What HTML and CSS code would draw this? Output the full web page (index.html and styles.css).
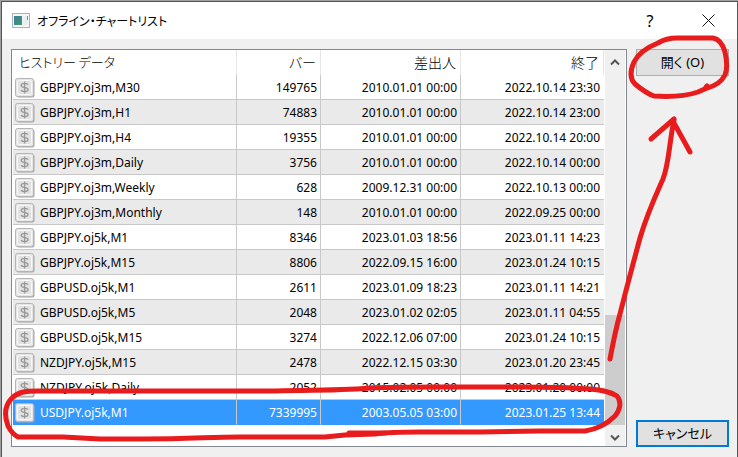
FILE: index.html
```
<!DOCTYPE html>
<html lang="ja">

<head>
    <meta charset="UTF-8">
    <meta name="viewport" content="width=device-width, initial-scale=1.0">
    <title>オフライン・チャートリスト</title>
    <link rel="stylesheet" href="styles.css">
</head>

<body>
    <div class="window">
        <header class="titlebar">
            <svg class="app-icon" width="18" height="15" viewBox="0 0 18 15">
                <rect x="0.5" y="0.5" width="17" height="14" fill="#f4f6f7" stroke="#a9b3b8" />
                <rect x="2" y="3" width="8" height="9" fill="url(#screen)" />
                <rect x="11" y="3" width="5" height="9" fill="#e9eef0" />
                <path d="M15.500 3v4" stroke="#5f9a8c" />
                <defs>
                    <linearGradient id="screen" x1="0" y1="0" x2="1" y2="1">
                        <stop offset="0" stop-color="#3f7fa5" />
                        <stop offset="1" stop-color="#3f9a62" />
                    </linearGradient>
                </defs>
            </svg>
            <h1>オフライン・チャートリスト</h1>
            <button class="title-btn help" aria-label="ヘルプ">?</button>
            <button class="title-btn" aria-label="閉じる">
                <svg width="13" height="13" viewBox="0 0 13 13">
                    <path d="M0.500 0.500l12 12M12.500 0.500l-12 12" fill="none" stroke="#111" />
                </svg>
            </button>
        </header>

        <main class="content">
            <div class="list">
                <table>
                    <colgroup>
                        <col>
                        <col class="col-bars">
                        <col class="col-from">
                        <col class="col-to">
                    </colgroup>
                    <thead>
                        <tr>
                            <th>ヒストリー データ</th>
                            <th>バー</th>
                            <th>差出人</th>
                            <th>終了</th>
                        </tr>
                    </thead>
                    <tbody id="rows"></tbody>
                </table>
                <div class="scrollbar">
                    <button class="arrow" aria-label="上へ">
                        <svg width="10" height="7" viewBox="0 0 10 7">
                            <path d="M1 5.500l4-4 4 4" />
                        </svg>
                    </button>
                    <div class="track">
                        <div class="thumb"></div>
                    </div>
                    <button class="arrow" aria-label="下へ">
                        <svg width="10" height="7" viewBox="0 0 10 7">
                            <path d="M1 1.500l4 4 4-4" />
                        </svg>
                    </button>
                </div>
            </div>

            <div class="actions">
                <button class="btn">開く (O)</button>
                <button class="btn btn-default">キャンセル</button>
            </div>
        </main>
    </div>

    <!-- red pen marks -->
    <svg class="marks" viewBox="0 0 738 457" preserveAspectRatio="none">
        <path d="M707 38H677C668 38 663 40 658 43C648 47 638 54 634 62C630 71 630 79 635 84C641 89 648 94 654 96C668 97 686 96 698 92L707 88C715 86 722 81 725 75C728 68 727 61 725 52C723 45 719 39 713 38Z" />
        <path d="M706 87l1-1" />
        <path d="M610 359C613 343 616 328 620 314C626 290 633 264 640 238C647 214 655 197 663 179C669 164 669 144 674 120" />
        <path d="M651 139L674 119M674 123L690 152" />
        <path d="M480 387H440C410 387 390 387 370 388C335 391 300 390 270 391H38C25 391 18 392 12 398C5 405 4 415 8 426C11 432 14 435 18 437H63L100 439H143C190 439 210 437 240 437H325L345 435L375 434C390 432 400 432 420 432H480L540 431H585C598 429 608 423 615 416C620 410 622 402 617 396C609 391 600 390 590 389C555 386 520 387 480 387Z" />
        <path d="M349 433L385 433" />
    </svg>

    <!-- coin icon used in every row -->
    <svg class="sprite" width="0" height="0">
        <symbol id="coin" viewBox="0 0 20 20">
            <rect x="1.500" y="1.500" width="18" height="18" rx="2" fill="#a6a6a6" />
            <rect x="0.500" y="0.500" width="18" height="18" rx="2" fill="#e6e6e6" stroke="#b4b4b4" />
            <rect x="2.500" y="2.500" width="14" height="14" rx="2" fill="#e2e2e2" stroke="#f8f8f8" />
            <path d="M13 6.500C12 5.500 10.500 5.300 9.500 5.300C7.500 5.300 6.200 6.100 6.200 7.400C6.200 10.200 13 8.400 13 11.500C13 12.900 11.500 13.600 9.600 13.600C8 13.600 6.800 13.200 6 12.300M9.600 3.500V15.500" fill="none" stroke="#999" stroke-width="1.300" />
        </symbol>
    </svg>

    <script>

        const history = [
            ['GBPJPY.oj3m,M30', '149765', '2010.01.01 00:00', '2022.10.14 23:30'],
            ['GBPJPY.oj3m,H1', '74883', '2010.01.01 00:00', '2022.10.14 23:00'],
            ['GBPJPY.oj3m,H4', '19355', '2010.01.01 00:00', '2022.10.14 20:00'],
            ['GBPJPY.oj3m,Daily', '3756', '2010.01.01 00:00', '2022.10.14 00:00'],
            ['GBPJPY.oj3m,Weekly', '628', '2009.12.31 00:00', '2022.10.13 00:00'],
            ['GBPJPY.oj3m,Monthly', '148', '2010.01.01 00:00', '2022.09.25 00:00'],
            ['GBPJPY.oj5k,M1', '8346', '2023.01.03 18:56', '2023.01.11 14:23'],
            ['GBPJPY.oj5k,M15', '8806', '2022.09.15 16:00', '2023.01.24 10:15'],
            ['GBPUSD.oj5k,M1', '2611', '2023.01.09 18:23', '2023.01.11 14:21'],
            ['GBPUSD.oj5k,M5', '2048', '2023.01.02 02:05', '2023.01.11 04:55'],
            ['GBPUSD.oj5k,M15', '3274', '2022.12.06 07:00', '2023.01.24 10:15'],
            ['NZDJPY.oj5k,M15', '2478', '2022.12.15 03:30', '2023.01.20 23:45'],
            ['NZDJPY.oj5k,Daily', '2052', '2015.02.05 00:00', '2023.01.20 00:00'],
            ['USDJPY.oj5k,M1', '7339995', '2003.05.05 03:00', '2023.01.25 13:44']
        ]

        const rows = document.querySelector('#rows')

        history.forEach(function (item, i) {
            const tr = document.createElement('tr')
            if (i === history.length - 1) {
                tr.className = 'selected'
            }
            tr.innerHTML = `<td><span class="name"><svg width="20" height="20"><use href="#coin" /></svg>${item[0]}</span></td>
                <td>${item[1]}</td><td>${item[2]}</td><td>${item[3]}</td>`
            rows.appendChild(tr)
        })
    </script>
</body>

</html>
```
FILE: styles.css
```
* {
    padding: 0;
    margin: 0;
    box-sizing: border-box;
}

body {
    position: relative;
    min-height: 100vh;
    padding: 1px 0 0 1px;
    background-color: #a0a0a0;
    color: #000;
    font-family: "Noto Sans", "Noto Sans CJK JP", sans-serif;
    font-size: 12px;
}

button {
    border: none;
    background: none;
    font-family: inherit;
    color: inherit;
}

.window {
    display: flex;
    flex-direction: column;
    min-height: calc(100vh - 1px);
    border: 1px solid #555;
    border-bottom: none;
    background-color: #f0f0f0;
}

.titlebar {
    display: flex;
    align-items: center;
    height: 37px;
    padding-left: 10px;
    background-color: white;
}

h1 {
    flex: 1;
    margin-left: 7px;
    font-family: "Noto Sans CJK JP", sans-serif;
    font-size: 12px;
    font-weight: 400;
    font-feature-settings: "palt";
}

.title-btn {
    display: flex;
    justify-content: center;
    align-items: center;
    width: 58px;
    height: 36px;
}

.help {
    font-size: 16px;
}

.content {
    display: flex;
    flex: 1;
    gap: 9px;
    padding: 10px 8px 10px 9px;
}

.list {
    display: flex;
    flex: 1;
    gap: 1px;
    padding: 0 1px;
    border: 1px solid #828790;
    background-color: white;
}

table {
    flex: 1;
    align-self: flex-start;
    table-layout: fixed;
    border-collapse: separate;
    border-spacing: 0;
}

.col-bars {
    width: 84px;
}

.col-from {
    width: 140px;
}

.col-to {
    width: 143px;
}

th {
    height: 25px;
    padding: 0 4px 2px;
    border-right: 1px solid #e5e5e5;
    font-family: "Noto Sans CJK JP", sans-serif;
    font-size: 14px;
    font-weight: 300;
    line-height: 20px;
    text-align: right;
    font-feature-settings: "palt";
}

th:first-child {
    padding-left: 6px;
    font-size: 13px;
    text-align: left;
}

td {
    height: 25px;
    padding: 1px 3px 0 2px;
    border-right: 1px solid #c8c8c8;
    border-bottom: 1px solid #c8c8c8;
    line-height: 20px;
    text-align: right;
    white-space: nowrap;
}

td:last-child {
    padding-right: 4px;
    border-right: none;
}

tbody tr:nth-child(even) {
    background-color: #eaeaea;
}

tbody tr.selected {
    background-color: #3399ff;
    color: white;
}

.selected td {
    border-bottom-color: #3399ff;
}

.name {
    display: flex;
    align-items: center;
    gap: 5px;
}

.scrollbar {
    display: flex;
    flex-direction: column;
    width: 20px;
    background-color: #f0f0f0;
}

.arrow {
    height: 21px;
}

.arrow path {
    fill: none;
    stroke: #555;
    stroke-width: 2;
}

.track {
    display: flex;
    flex: 1;
    flex-direction: column;
    justify-content: flex-end;
}

.thumb {
    height: 31%;
    background-color: #cdcdcd;
}

.actions {
    display: flex;
    flex-direction: column;
    justify-content: space-between;
    width: 93px;
}

.btn {
    height: 27px;
    padding-bottom: 2px;
    border: 1px solid #adadad;
    background-color: #e1e1e1;
    font-size: 13px;
    font-feature-settings: "palt";
}

.btn-default {
    border: 2px solid #0078d7;
}

.marks {
    position: absolute;
    top: 0;
    left: 0;
    width: 100%;
    height: 100%;
    pointer-events: none;
}

.marks path {
    fill: none;
    stroke: #e81c1c;
    stroke-width: 5;
    stroke-linecap: round;
    stroke-linejoin: round;
}

.sprite {
    position: absolute;
}
```
